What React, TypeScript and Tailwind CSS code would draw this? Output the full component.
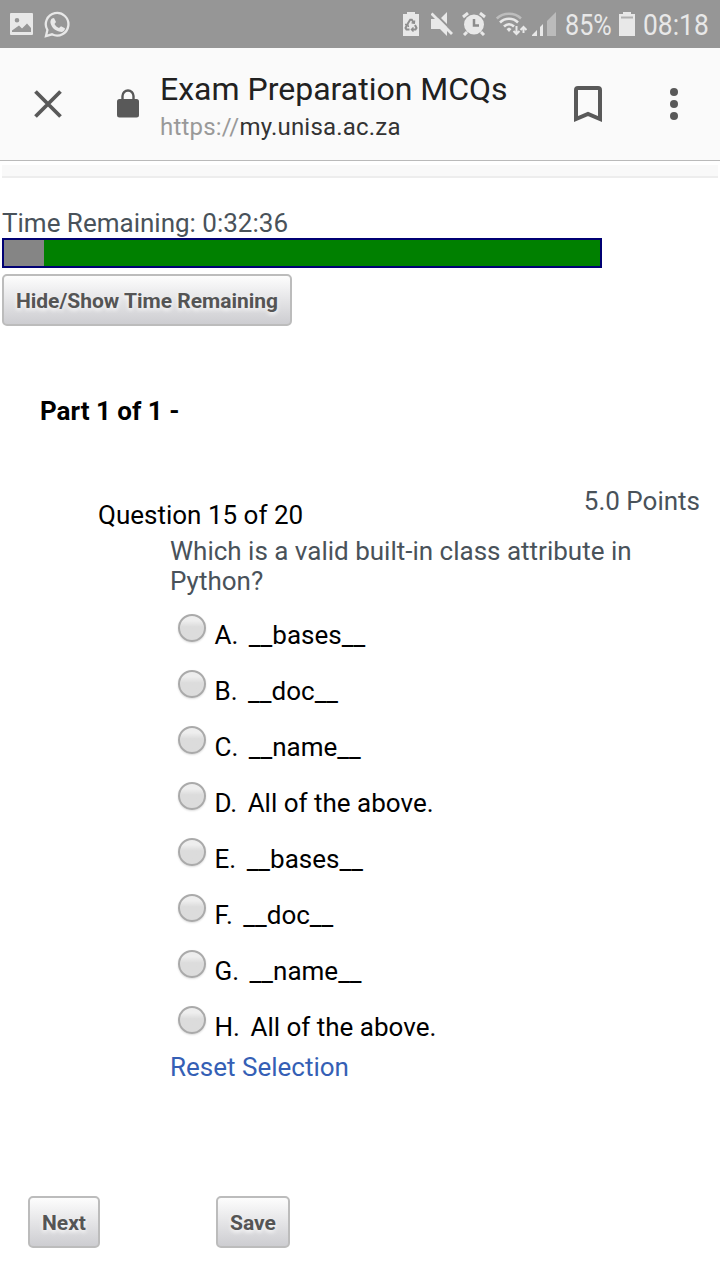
import React from "react";

const options = [
  ["A", "__bases__"],
  ["B", "__doc__"],
  ["C", "__name__"],
  ["D", "All of the above."],
  ["E", "__bases__"],
  ["F", "__doc__"],
  ["G", "__name__"],
  ["H", "All of the above."],
];

function StatusBar() {
  return (
    <div className="flex h-12 items-center bg-[#969696] text-[#e8e8e8]">
      <svg className="ml-2.5 h-6 w-[23px] shrink-0" viewBox="0 0 23 24">
        <path fill="currentColor" fillRule="evenodd" d="M1 1h21a1 1 0 0 1 1 1v20a1 1 0 0 1-1 1H1a1 1 0 0 1-1-1V2a1 1 0 0 1 1-1zM2 20h19v-4l-4-4.500-5 5-3-3-7 5zM7 6a2.300 2.300 0 1 0 0 4.600A2.300 2.300 0 0 0 7 6z" />
      </svg>
      <svg className="ml-[11px] h-[27px] w-[27px] shrink-0" viewBox="0 0 27 27">
        <path d="M2 25 3.400 19A11.300 11.300 0 1 1 8 23.300z" fill="none" stroke="currentColor" strokeWidth="2.300" />
        <path fill="currentColor" d="M8 7.500 10 7l2 4-1.500 2c1 2 2.500 3.200 4.500 4l2-1.700 4 2c-.3 3-2.500 4-5 3.500C11 19.700 7.500 16.500 6.500 12c-.3-2 .3-3.500 1.500-4.500z" />
      </svg>
      <svg className="ml-[332px] h-6 w-4 shrink-0" viewBox="0 0 16 24">
        <path fill="currentColor" d="M0 2h4V0h8v2h4v22H0z" />
        <g fill="none" stroke="#8e8e8e" strokeWidth="2">
          <path d="m4.500 12 2.700-4.200h1.600L11 11M12 13l1.500 3-1 1.500H9M6.500 17.500h-3l-1-1.500L4 13" />
          <path strokeWidth="1.500" d="m11.500 8.500-.2 2.700-2.700-.5M10.500 15.500l-2 2 2 2M2 12.500h2.700l.8 2.500" />
        </g>
      </svg>
      <svg className="ml-3 h-6 w-[22px] shrink-0" viewBox="0 0 22 24" fill="currentColor">
        <path d="M0 7h5l2.500-.5L16 15v9l-7-7H0zM10 6l6-6v12z" />
        <path d="m.5 1.500 20.500 20.500" stroke="currentColor" strokeWidth="2.800" />
      </svg>
      <svg className="ml-[9px] h-6 w-6 shrink-0" viewBox="0 0 24 24">
        <circle cx="12" cy="12.500" r="10" fill="currentColor" />
        <path d="M1 5 6 1M18 1l5 4M5 20l-3 3M19 20l3 3" stroke="currentColor" strokeWidth="3" />
        <path d="M12 7v6.500h5" fill="none" stroke="#8c8c8c" strokeWidth="2.500" />
      </svg>
      <svg className="ml-2.5 h-6 w-[31px] shrink-0" viewBox="0 0 31 24" fill="none" stroke="currentColor">
        <path d="M.8 6.500C7.500.2 18.500.2 25 6.500" stroke="#bdbdbd" strokeWidth="2.500" />
        <path d="M4 10.500c5-5 13-5 18 0M8 14.500c3-3 7-3 10 0" strokeWidth="2.500" />
        <path d="m10.500 17 2.500-1.500 2.500 1.500L13 20z" fill="currentColor" stroke="none" />
        <path d="M20.500 14v8m-3-3 3 3 3-3M27.500 21v-6m-3 3 3-3 3 3" strokeWidth="2" />
      </svg>
      <svg className="ml-[5px] h-6 w-6 shrink-0" viewBox="0 0 24 24" fill="currentColor">
        <path d="M0 24v-1l5-5v6zM8 24V15l3-3v12z" />
        <path fill="#bbbbbb" d="M15 24V9l9-9v24z" />
      </svg>
      <span className="ml-[9px] mt-[2px] w-[46px] origin-left scale-x-[0.84] whitespace-nowrap text-[30px] leading-[48px]">85%</span>
      <svg className="ml-[8px] h-6 w-4 shrink-0" viewBox="0 0 16 24" fill="currentColor">
        <path d="M0 2h4V0h8v2h4v22H0z" />
        <path fill="#b0b0b0" d="M2 4.500h12v2H2z" />
      </svg>
      <span className="ml-[8px] mt-[2px] w-[66px] origin-left scale-x-[0.88] whitespace-nowrap text-[30px] leading-[48px]">08:18</span>
    </div>
  );
}

function BrowserBar() {
  return (
    <header className="flex h-[113px] items-center border-b border-[#bababa] bg-[#fafafa] text-[#595959]">
      <svg className="ml-[34px] h-7 w-7 shrink-0" viewBox="0 0 28 28">
        <path d="m1.500 1.500 25 25M26.500 1.500l-25 25" stroke="currentColor" strokeWidth="3.800" />
      </svg>
      <svg className="-mt-0.5 ml-[55px] h-[29px] w-[22px] shrink-0" viewBox="0 0 22 29">
        <rect y="10" width="22" height="18.500" rx="2.500" fill="currentColor" />
        <path d="M5.500 11V7a5.500 5.500 0 0 1 11 0v4" fill="none" stroke="currentColor" strokeWidth="2.400" />
      </svg>
      <div className="ml-[21px] w-[413px] whitespace-nowrap pt-[7px]">
        <div className="h-[38px] text-[32px] leading-[36px] text-[#212121]">Exam Preparation MCQs</div>
        <div className="h-9 text-[24px] leading-[37px] tracking-[0.2px] text-[#333]">
          <span className="text-[#999]">https://</span>my.unisa.ac.za
        </div>
      </div>
      <svg className="ml-px h-9 w-7 shrink-0" viewBox="0 0 28 36">
        <path d="M2 33V4a2 2 0 0 1 2-2h20a2 2 0 0 1 2 2v29l-12-5z" fill="none" stroke="currentColor" strokeWidth="4" />
      </svg>
      <svg className="ml-[68px] h-8 w-2 shrink-0 overflow-visible" viewBox="0 0 8 32" fill="currentColor">
        <circle cx="4" cy="4" r="4" /><circle cx="4" cy="16" r="4" /><circle cx="4" cy="28" r="4" />
      </svg>
    </header>
  );
}

function GrayButton({ children, className }: { children: React.ReactNode; className: string }) {
  return (
    <button className={`h-[52px] whitespace-nowrap rounded-[5px] border-2 border-[#bcbcbc] bg-linear-to-b from-[#fdfdfd] to-[#cdcdd1] pt-[2px] text-center text-[21px] font-bold leading-[46px] text-[#555] [text-shadow:0_2px_4px_#fff] ${className}`}>
      {children}
    </button>
  );
}

function Answer({ text }: { text: string }) {
  return (
    <>
      {text.split(/(__)/).map((part, i) =>
        part === "__" ? <span key={i} className="relative top-px">{part}</span> : part
      )}
    </>
  );
}

export default function App() {
  return (
    <div className="h-[1280px] w-[720px] overflow-hidden bg-white font-['Roboto',sans-serif] text-[26px] leading-[30px] text-black">
      <StatusBar />
      <BrowserBar />
      <div className="mx-0.5 mt-1 h-[13px] border-b-2 border-[#ededed] bg-[#f9f9f9]" />
      <main className="flex flex-col items-start whitespace-nowrap">
        <div className="ml-0.5 mt-[30px] h-[30px] text-[#49525a]">Time Remaining: 0:32:36</div>
        <div className="ml-0.5 flex h-[30px] w-[600px] border-2 border-[#000073] bg-[#008000]">
          <div className="w-10 bg-[#858585]" />
        </div>
        <GrayButton className="ml-0.5 mt-1.5 w-[290px]">Hide/Show Time Remaining</GrayButton>
        <div className="ml-10 mt-[70px] h-[30px] font-bold">Part 1 of 1 -</div>
        <div className="mt-[60px] flex h-11 w-full justify-between pl-[98px] pr-5">
          <span className="mt-[14px]">Question 15 of 20</span>
          <span className="text-[#49525a]">5.0 Points</span>
        </div>
        <section className="ml-[170px] mt-[6px]">
          <p className="text-[#49525a]">Which is a valid built-in class attribute in<br />Python?</p>
          <div className="mt-[10px]">
            {options.map(([letter, answer]) => (
              <label key={letter} className="flex h-14 pl-2">
                <span className="mt-[8px] h-7 w-7 rounded-full border-2 border-[#aaa] bg-linear-to-b from-[#eee] from-20% to-[#dcdcdc] to-45% shadow-[0_1px_2px_#ddd]" />
                <span className="ml-[8.5px] mt-[14px]">{letter}.</span>
                <span className="ml-[10.5px] mt-[14px]"><Answer text={answer} /></span>
              </label>
            ))}
          </div>
          <a className="-mt-0.5 block text-[#355fb5]">Reset Selection</a>
        </section>
        <div className="mt-[114px] flex pl-7">
          <GrayButton className="w-[72px]">Next</GrayButton>
          <GrayButton className="ml-[116px] w-[74px]">Save</GrayButton>
        </div>
      </main>
    </div>
  );
}
